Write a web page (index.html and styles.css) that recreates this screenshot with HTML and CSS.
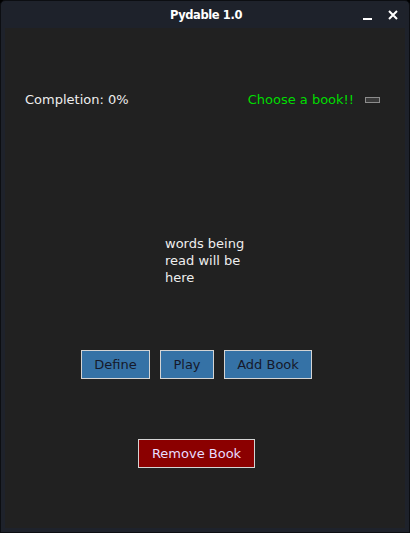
FILE: index.html
```html
<!DOCTYPE html>
<html>
<head>
<meta charset="utf-8">
<link rel="stylesheet" href="styles.css">
</head>
<body>
<div class="window">
  <div class="titlebar">
    <span class="title">Pydable 1.0</span>
    <div class="controls">
      <span class="minimize"></span>
      <svg class="close" width="10" height="10" viewBox="0 0 10 10"><path d="M1 1L9 9M9 1L1 9" stroke="#ffffff" stroke-width="2"/></svg>
    </div>
  </div>
  <div class="content">
    <div class="status-row">
      <span class="completion">Completion: 0%</span>
      <div class="book-pick">
        <span class="choose">Choose a book!!</span>
        <span class="menu-btn"></span>
      </div>
    </div>
    <div class="words">words being<br>read will be<br>here</div>
    <div class="button-row">
      <button class="btn blue define">Define</button>
      <button class="btn blue play">Play</button>
      <button class="btn blue add">Add Book</button>
    </div>
    <div class="remove-row">
      <button class="btn red">Remove Book</button>
    </div>
  </div>
</div>
</body>
</html>
```
FILE: styles.css
```css
html, body {
  margin: 0;
  padding: 0;
  background: #000000;
}
.window {
  width: 410px;
  height: 533px;
  box-sizing: border-box;
  background: #1e222b;
  border: 1px solid #0c0e12;
  border-radius: 5px 5px 0 0;
  display: flex;
  flex-direction: column;
  padding: 0 4px 4px 4px;
  font-family: "DejaVu Sans", sans-serif;
}
.titlebar {
  height: 27px;
  display: flex;
  align-items: center;
  justify-content: center;
  position: relative;
}
.title {
  color: #ffffff;
  font-weight: bold;
  font-size: 11.5px;
  letter-spacing: -0.4px;
  margin-left: 2px;
}
.controls {
  position: absolute;
  right: 7px;
  top: 9px;
  display: flex;
  align-items: center;
  gap: 16px;
}
.minimize {
  width: 9px;
  height: 2px;
  background: #ffffff;
  margin-top: 8px;
}
.close {
  display: block;
}
.content {
  flex: 1;
  background: #212121;
  display: flex;
  flex-direction: column;
}
.status-row {
  display: flex;
  justify-content: space-between;
  align-items: center;
  margin-top: 64px;
  padding: 0 25px 0 20px;
  font-size: 13px;
}
.completion {
  color: #eeeeee;
}
.book-pick {
  display: flex;
  align-items: center;
  gap: 11px;
}
.choose {
  color: #00dd00;
}
.menu-btn {
  width: 13px;
  height: 4px;
  border: 1px solid #8c8c8c;
  background: #3a3a3a;
  margin-top: 1px;
}
.words {
  margin: 128px 0 0 160px;
  color: #eeeeee;
  font-size: 13px;
  line-height: 17px;
}
.button-row {
  display: flex;
  margin: 64px 0 0 76px;
  gap: 10px;
}
.btn {
  font-family: "DejaVu Sans", sans-serif;
  font-size: 13px;
  height: 29px;
  box-sizing: border-box;
  border: 1px solid #d4d4d4;
  padding: 0;
  margin: 0;
  cursor: default;
}
.blue {
  background: #3572a6;
  color: #15192a;
}
.define { width: 69px; }
.play { width: 54px; }
.add { width: 88px; }
.remove-row {
  display: flex;
  margin: 60px 0 0 133px;
}
.red {
  background: #8b0000;
  color: #e8dcff;
  width: 117px;
}
```
